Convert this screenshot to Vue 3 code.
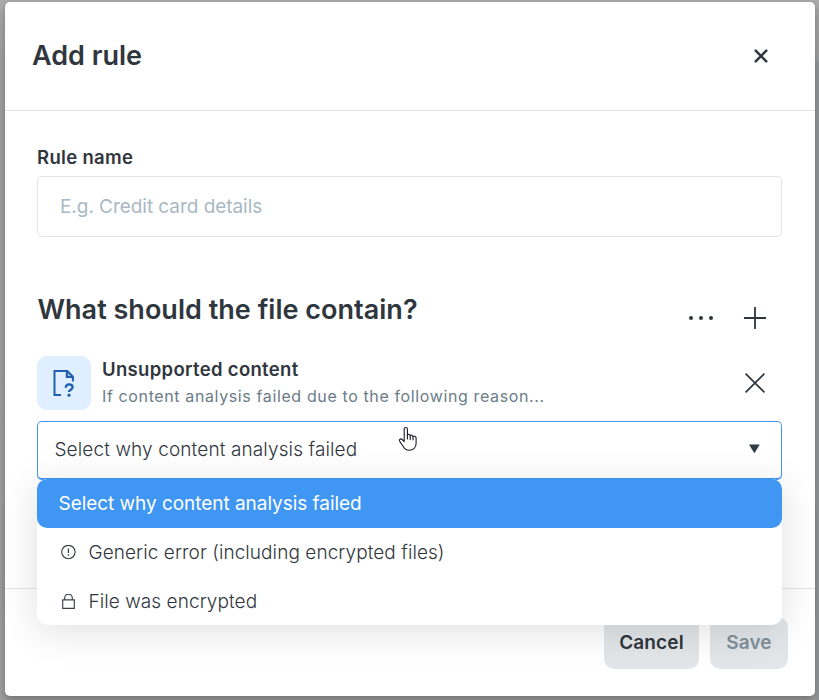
<script setup>
import { ref } from 'vue'

const ruleName = ref('')
const placeholder = 'Select why content analysis failed'
const reasons = [
  { label: 'Generic error (including encrypted files)', icon: 'alert' },
  { label: 'File was encrypted', icon: 'lock' },
]
</script>

<template>
  <div class="backdrop">
    <section class="modal" role="dialog" aria-label="Add rule">
      <header class="modal-header">
        <h1 class="title">Add rule</h1>
        <button class="icon-btn close" aria-label="Close">
          <svg width="14" height="14" viewBox="0 0 14 14"><path d="M1.7 1.7 12.3 12.3M12.3 1.7 1.7 12.3" /></svg>
        </button>
      </header>

      <main class="modal-body">
        <label class="label" for="rule-name">Rule name</label>
        <input id="rule-name" v-model="ruleName" class="input" placeholder="E.g. Credit card details" />

        <div class="section-head">
          <h2 class="section-title">What should the file contain?</h2>
          <div class="section-actions">
            <button class="icon-btn" aria-label="More">
              <svg width="26" height="6" viewBox="0 0 26 6" fill="#2f363d"><circle cx="3" cy="3" r="2" /><circle cx="13" cy="3" r="2" /><circle cx="23" cy="3" r="2" /></svg>
            </button>
            <button class="icon-btn" aria-label="Add">
              <svg width="22" height="22" viewBox="0 0 22 22"><path d="M0 11h22M11 0v22" stroke="#2f363d" stroke-width="1.8" /></svg>
            </button>
          </div>
        </div>

        <div class="condition">
          <div class="tile">
            <svg width="22" height="28" viewBox="0 0 22 28" fill="none" stroke="#1f5fb0" stroke-width="2">
              <path d="M8 26H1.5V2h12.8l5.6 5.6v4.9" />
              <path d="M13.8 2v6.1h6.1" />
              <path d="M13.8 2 19.9 8.1h-6.1z" fill="#1f5fb0" fill-opacity=".35" stroke="none" />
              <path d="M12.7 18.8c.1-2.3 1.5-3.4 3.5-3.4s3.4 1.2 3.4 2.9c0 2.4-3.6 2.5-3.6 4.8" stroke-width="2.3" />
              <circle cx="16" cy="26.2" r="1.6" fill="#1f5fb0" stroke="none" />
            </svg>
          </div>
          <div class="condition-text">
            <div class="condition-name">Unsupported content</div>
            <div class="condition-desc">If content analysis failed due to the following reason...</div>
          </div>
          <button class="icon-btn remove" aria-label="Remove">
            <svg width="20" height="20" viewBox="0 0 20 20"><path d="M.6.6l18.8 18.8M19.4.6.6 19.4" stroke="#2f363d" stroke-width="1.7" /></svg>
          </button>
        </div>

        <div class="select-wrap">
          <div class="select">
            <span class="select-value">{{ placeholder }}</span>
            <svg width="12" height="10" viewBox="0 0 12 10"><path d="M0 .6h10.8L5.4 9.2z" fill="#2f3b44" /></svg>
          </div>
          <ul class="menu">
            <li class="option selected"><span>{{ placeholder }}</span></li>
            <li v-for="r in reasons" :key="r.icon" class="option">
              <svg v-if="r.icon === 'alert'" width="16" height="16" viewBox="0 0 16 16" fill="none" stroke="#3c434a" stroke-width="1.15">
                <circle cx="7.4" cy="7" r="6.7" /><path d="M7.4 3.4V8M7.4 9.3v1.5" stroke-width="1.3" />
              </svg>
              <svg v-else width="16" height="16" viewBox="0 0 16 16" fill="none" stroke="#3c434a" stroke-width="1.15">
                <path d="M1.7 5.9h11.6v8.4H1.7zM3.7 5.8V3.9a3.8 3.8 0 0 1 7.6 0v1.9" />
              </svg>
              <span>{{ r.label }}</span>
            </li>
          </ul>
          <svg class="pointer" width="20" height="26" viewBox="0 0 20 26" fill="#fff" stroke="#1c1b2b" stroke-width="1.1" stroke-linejoin="round" stroke-linecap="round">
            <path d="M6.2 15.5V3.1c0-2.2 3.2-2.2 3.2 0v6.1c.3-1.2 2.7-1 2.8.5.6-.9 2.7-.6 2.8.9.8-.8 3.1-.4 3.1 1.4v5.3c0 4-2.7 6.9-6.9 6.9-3.2 0-4.9-1.5-6.3-4.2l-3-4.4c-1.5-2.1.9-3.5 2.3-2.1z" />
            <path d="M9.4 9v4M12.2 9.8v3.6M15 10.7v3.1" />
          </svg>
        </div>
      </main>

      <footer class="modal-footer">
        <button class="btn cancel">Cancel</button>
        <button class="btn save" disabled>Save</button>
      </footer>
    </section>
  </div>
</template>

<style>
body {
  margin: 0;
  background: #929292;
}
</style>

<style scoped>
* {
  box-sizing: border-box;
}
.backdrop {
  width: 819px;
  height: 700px;
  padding: 2px 4px 4px 5px;
  overflow: hidden;
  background:
    linear-gradient(#969a9d, #969a9d) 100% 62px / 4px 638px no-repeat,
    linear-gradient(#acacac, #a2a2a2 62px, #a0a0a0);
  font-family: Inter, "Liberation Sans", sans-serif;
  color: #2f363d;
}
.modal {
  display: flex;
  flex-direction: column;
  height: 694px;
  background: #fff;
  border-radius: 5px;
  box-shadow: 0 4px 10px rgba(0, 0, 0, 0.3);
}
.modal-header {
  display: flex;
  align-items: center;
  justify-content: space-between;
  height: 109px;
  padding: 0 47.5px 0 27px;
  border-bottom: 1px solid #e1e5e8;
}
.title,
.section-title {
  margin: 0;
  font-size: 27px;
  line-height: 34px;
  font-weight: 600;
}
.title {
  letter-spacing: 0;
}
.section-title {
  padding-left: 0.5px;
  letter-spacing: 0.02px;
}
.icon-btn {
  display: flex;
  padding: 0;
  border: 0;
  background: none;
}
.close path {
  stroke: #2f363d;
  stroke-width: 2.5;
  stroke-linecap: round;
}
.modal-body {
  display: flex;
  flex-direction: column;
  height: 477px;
  padding: 34px 33px 0 32px;
}
.label {
  font-size: 18.5px;
  line-height: 24px;
  font-weight: 600;
  letter-spacing: 0.32px;
  height: 31px;
}
.input {
  height: 61px;
  padding: 0 22px;
  border: 1px solid #e1e5e8;
  border-radius: 5px;
  font: 400 19px Inter, sans-serif;
  letter-spacing: -0.05px;
  outline: none;
}
.input::placeholder {
  color: #a9b8c2;
}
.section-head {
  display: flex;
  justify-content: space-between;
  height: 119px;
  padding-top: 56px;
}
.section-actions {
  display: flex;
  align-items: center;
  gap: 30px;
  height: 50px;
  padding-right: 16px;
}
.condition {
  display: flex;
  align-items: center;
  height: 54px;
  padding-right: 17px;
}
.tile {
  display: flex;
  align-items: center;
  justify-content: center;
  width: 54px;
  height: 54px;
  border-radius: 10px;
  background: #e0efff;
}
.condition-text {
  flex: 1;
  padding-left: 11px;
}
.condition-name {
  font-size: 18.5px;
  line-height: 27px;
  font-weight: 600;
  letter-spacing: 0.32px;
}
.condition-desc {
  font-size: 16px;
  line-height: 27px;
  letter-spacing: 0.62px;
  color: #6b7c88;
}
.select-wrap {
  position: relative;
  margin-top: 11px;
}
.select {
  display: flex;
  align-items: center;
  justify-content: space-between;
  height: 59px;
  padding: 0 20px 2px 16.5px;
  border: 1px solid #3f96f3;
  border-bottom-width: 2px;
  border-radius: 5px;
  font-size: 19px;
  font-weight: 300;
  letter-spacing: 0.12px;
}
.menu {
  position: absolute;
  top: 58px;
  left: 0;
  right: 0;
  margin: 0;
  padding: 0;
  height: 146px;
  list-style: none;
  background: #fff;
  border-radius: 10px;
  box-shadow: 0 6px 38px rgba(0, 0, 0, 0.13);
}
.option {
  display: flex;
  align-items: center;
  gap: 11.5px;
  height: 49px;
  padding-left: 24px;
  font-size: 19px;
  font-weight: 300;
  letter-spacing: 0.07px;
}
.option.selected {
  padding-left: 21.5px;
  border-radius: 10px;
  background: #3f96f3;
  color: #fff;
  font-weight: 400;
  letter-spacing: -0.04px;
}
.pointer {
  position: absolute;
  left: 361px;
  top: 5px;
}
.modal-footer {
  display: flex;
  justify-content: flex-end;
  gap: 11px;
  height: 108px;
  padding: 28px 27px 0 0;
  border-top: 1px solid #e1e5e8;
}
.btn {
  height: 52px;
  padding: 0 0 2px;
  border: 0;
  border-radius: 10px;
  background: #e2e6e9;
  font: 600 19px Inter, sans-serif;
  color: #2f363d;
}
.cancel {
  width: 95px;
  letter-spacing: 0.15px;
}
.save {
  width: 78px;
  letter-spacing: 0.1px;
  color: #80909b;
}
</style>
